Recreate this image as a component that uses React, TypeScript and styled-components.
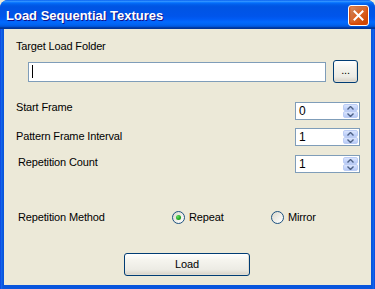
import React from 'react';
import styled, { createGlobalStyle } from 'styled-components';

const GlobalStyle = createGlobalStyle`
  html, body {
    margin: 0;
    padding: 0;
    background: #ece9d8;
  }
  * {
    box-sizing: border-box;
  }
`;

const Window = styled.div`
  width: 375px;
  height: 289px;
  display: flex;
  flex-direction: column;
  background: linear-gradient(to right, #0831d9 0, #166aee 1px, #0855dd 3px, #0855dd 372px, #166aee 374px, #0831d9 375px);
  border-radius: 8px 8px 0 0;
  overflow: hidden;
  font-family: 'Liberation Sans', Arial, sans-serif;
  font-size: 11px;
  color: #000;
`;

const TitleBar = styled.div`
  height: 29px;
  flex: none;
  display: flex;
  align-items: center;
  padding: 0 6px 0 6px;
  background: linear-gradient(
    to bottom,
    #0058ee 0%,
    #3593ff 4%,
    #288eff 6%,
    #127dff 8%,
    #036ffc 10%,
    #0262ee 14%,
    #0057e5 20%,
    #0054e3 24%,
    #0055eb 56%,
    #005bf5 66%,
    #026afe 76%,
    #0062ef 86%,
    #0052d6 92%,
    #0040ab 94%,
    #003092 100%
  );
`;

const Title = styled.div`
  flex: 1;
  color: #fff;
  font-weight: bold;
  font-size: 13px;
  text-shadow: 1px 1px #0f1089;
  padding-top: 1px;
`;

const CloseButton = styled.div`
  width: 21px;
  height: 21px;
  border: 1px solid #fff;
  border-radius: 3px;
  display: flex;
  align-items: center;
  justify-content: center;
  background: radial-gradient(circle at 90% 90%, #cc4600 0%, #dc6527 55%, #cd7546 70%, #e7925c 100%);
  box-shadow: inset 0 -1px 2px 1px #da4600;
  margin-top: 1px;
`;

const Body = styled.div`
  flex: 1;
  margin: 0 4px 4px 4px;
  background: #ece9d8;
  display: flex;
  flex-direction: column;
  padding: 11px 11px 0 12px;
  line-height: 13px;
  letter-spacing: -0.15px;
`;

const Label = styled.div<{ $shift?: number; $indent?: number }>`
  margin-top: ${(p) => p.$shift ?? 0}px;
  padding-left: ${(p) => p.$indent ?? 0}px;
  white-space: nowrap;
`;

const FolderRow = styled.div`
  display: flex;
  align-items: center;
  margin: 7px 0 0 12px;
  height: 23px;
`;

const TextBox = styled.div`
  width: 298px;
  height: 20px;
  border: 1px solid #7f9db9;
  background: #fff;
  display: flex;
  align-items: center;
  padding-left: 3px;
`;

const Caret = styled.span`
  width: 1px;
  height: 13px;
  background: #000;
`;

const XPButton = styled.div<{ $w: number }>`
  width: ${(p) => p.$w}px;
  height: 23px;
  border: 1px solid #003c74;
  border-radius: 3px;
  background: linear-gradient(to bottom, #fff 0%, #f5f4ee 30%, #ecebe4 75%, #d6d0c5 100%);
  display: flex;
  align-items: center;
  justify-content: center;
  box-shadow: inset -1px -1px 0 #e0ddd3;
`;

const BrowseButton = styled(XPButton)`
  margin-left: 7px;
  padding-bottom: 2px;
`;

const FieldRow = styled.div<{ $gap: number }>`
  display: flex;
  align-items: flex-start;
  justify-content: space-between;
  margin-top: ${(p) => p.$gap}px;
  height: 18px;
`;

const Spinner = styled.div`
  width: 65px;
  height: 18px;
  border: 1px solid #7f9db9;
  background: #fff;
  display: flex;
  align-items: center;
  padding: 1px;
`;

const SpinValue = styled.span`
  flex: 1;
  padding-left: 2px;
  font-size: 12px;
`;

const SpinButtons = styled.div`
  width: 15px;
  height: 14px;
  display: flex;
  flex-direction: column;
`;

const SpinHalf = styled.div`
  flex: 1;
  display: flex;
  align-items: center;
  justify-content: center;
  border: 1px solid #bccdf5;
  background: linear-gradient(to bottom, #dae5fd 0%, #c5d5fb 60%, #b6c9f4 100%);
  border-radius: 2px;
`;

const MethodRow = styled.div`
  display: flex;
  align-items: center;
  margin-top: 37px;
  height: 15px;
`;

const MethodLabel = styled.div`
  width: 156px;
  padding-left: 2px;
  margin-top: -1px;
`;

const RadioOption = styled.label<{ $w?: number }>`
  display: flex;
  align-items: center;
  gap: 4px;
  width: ${(p) => (p.$w ? `${p.$w}px` : 'auto')};
`;

const RadioCircle = styled.span<{ $checked?: boolean }>`
  width: 13px;
  height: 13px;
  border-radius: 50%;
  border: 1px solid #1c5180;
  background: linear-gradient(135deg, #dcd9cc 0%, #f2f1ec 60%, #fff 100%);
  display: flex;
  align-items: center;
  justify-content: center;
  &::after {
    content: '';
    display: ${(p) => (p.$checked ? 'block' : 'none')};
    width: 5px;
    height: 5px;
    border-radius: 50%;
    background: radial-gradient(circle at 35% 35%, #5fe05f 0%, #21a121 60%, #1a7d1a 100%);
  }
`;

const Footer = styled.div`
  display: flex;
  justify-content: center;
  margin-top: 28px;
  padding-right: 2px;
`;

const Arrow = ({ up }: { up?: boolean }) => (
  <svg width="7" height="4" viewBox="0 0 7 4">
    <path
      d={up ? 'M0.5 3.5 L3.5 0.5 L6.5 3.5' : 'M0.5 0.5 L3.5 3.5 L6.5 0.5'}
      fill="none"
      stroke="#4d6185"
      strokeWidth="1.4"
    />
  </svg>
);

const NumberField = ({ value }: { value: string }) => (
  <Spinner>
    <SpinValue>{value}</SpinValue>
    <SpinButtons>
      <SpinHalf>
        <Arrow up />
      </SpinHalf>
      <SpinHalf>
        <Arrow />
      </SpinHalf>
    </SpinButtons>
  </Spinner>
);

const fields = [
  { label: 'Start Frame', value: '0', gap: 19, shift: -1, indent: 0 },
  { label: 'Pattern Frame Interval', value: '1', gap: 8, shift: 2, indent: 0 },
  { label: 'Repetition Count', value: '1', gap: 9, shift: 1, indent: 2 },
];

export default function App() {
  return (
    <>
      <GlobalStyle />
      <Window>
        <TitleBar>
          <Title>Load Sequential Textures</Title>
          <CloseButton>
            <svg width="11" height="11" viewBox="0 0 11 11">
              <path d="M1.5 1.5 L9.5 9.5 M9.5 1.5 L1.5 9.5" stroke="#fff" strokeWidth="2" strokeLinecap="square" />
            </svg>
          </CloseButton>
        </TitleBar>
        <Body>
          <Label>Target Load Folder</Label>
          <FolderRow>
            <TextBox>
              <Caret />
            </TextBox>
            <BrowseButton $w={25}>...</BrowseButton>
          </FolderRow>
          {fields.map((f) => (
            <FieldRow key={f.label} $gap={f.gap}>
              <Label $shift={f.shift} $indent={f.indent}>
                {f.label}
              </Label>
              <NumberField value={f.value} />
            </FieldRow>
          ))}
          <MethodRow>
            <MethodLabel>Repetition Method</MethodLabel>
            <RadioOption $w={99}>
              <RadioCircle $checked />
              Repeat
            </RadioOption>
            <RadioOption>
              <RadioCircle />
              Mirror
            </RadioOption>
          </MethodRow>
          <Footer>
            <XPButton $w={126}>Load</XPButton>
          </Footer>
        </Body>
      </Window>
    </>
  );
}
